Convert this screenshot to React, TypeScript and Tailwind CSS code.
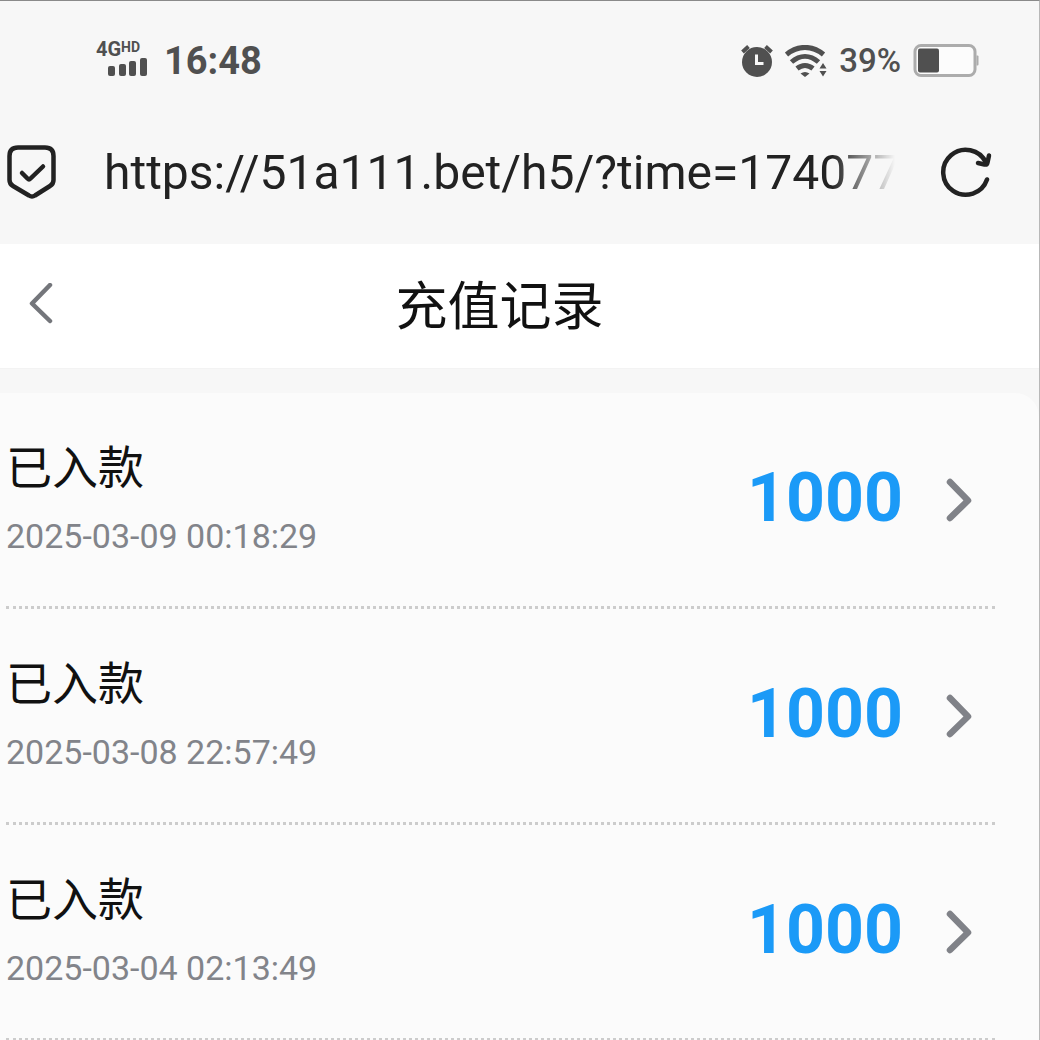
interface DepositRecord {
  id: number;
  status: string;
  time: string;
  amount: number;
}

const RECORDS: DepositRecord[] = [
  { id: 1, status: "已入款", time: "2025-03-09 00:18:29", amount: 1000 },
  { id: 2, status: "已入款", time: "2025-03-08 22:57:49", amount: 1000 },
  { id: 3, status: "已入款", time: "2025-03-04 02:13:49", amount: 1000 },
];

function SignalIcon() {
  return (
    <svg width="40" height="20" viewBox="0 0 40 20" fill="currentColor" aria-hidden="true">
      <rect x="0" y="9" width="7" height="10" rx="2" />
      <rect x="11" y="7" width="7" height="12" rx="2" />
      <rect x="21" y="4" width="7" height="15" rx="2" />
      <rect x="32" y="1" width="7" height="18" rx="2" />
    </svg>
  );
}

function AlarmIcon() {
  return (
    <svg width="32" height="34" viewBox="0 0 32 34" aria-hidden="true">
      <circle cx="16" cy="18" r="15" fill="currentColor" />
      <path d="M1.500 8 7.500 2.500M30.500 8 24.500 2.500" stroke="currentColor" strokeWidth="4" />
      <path d="M15.500 10.500V19.500H22.500" fill="none" stroke="#f7f7f7" strokeWidth="3" />
    </svg>
  );
}

function WifiIcon() {
  return (
    <svg width="42" height="32" viewBox="0 0 42 32" aria-hidden="true">
      <g fill="none" stroke="currentColor" strokeWidth="5">
        <path d="M1.500 9.500C12.500 0 27.500 0 38.500 9.500" />
        <path d="M6.500 17C15 9.500 25 9.500 33.500 17" />
        <path d="M12 23.500C17 19.500 23 19.500 28 23.500" />
      </g>
      <path d="M15.500 28.500Q20 25.500 24.500 28.500L20 32Z" fill="currentColor" />
      <path d="M34.500 23.500 38 18 41.500 23.500ZM34.500 26H41.500L38 31.500Z" fill="currentColor" />
    </svg>
  );
}

function BatteryIcon() {
  return (
    <svg width="66" height="34" viewBox="0 0 66 34" aria-hidden="true">
      <rect x="2" y="1.500" width="60" height="30" rx="6" fill="#fcfcfc" stroke="#acacac" strokeWidth="3" />
      <rect x="5" y="4.500" width="21" height="24" rx="2" fill="#505050" />
      <path d="M63.500 11.500h1q1 0 1 1v8q0 1-1 1h-1Z" fill="#acacac" />
    </svg>
  );
}

function ShieldIcon() {
  return (
    <svg
      width="50"
      height="56"
      viewBox="-1 1 50 56"
      fill="none"
      stroke="currentColor"
      strokeWidth="4.500"
      strokeLinecap="round"
      strokeLinejoin="round"
      aria-hidden="true"
    >
      <path d="M11 3.500H38Q46.500 3.500 46.500 12V36Q46.500 40 43 42L28 51.500Q25 53.500 22 51.500L6 42Q2.500 40 2.500 36V12Q2.500 3.500 11 3.500Z" />
      <path d="M15 29 20.500 34.500Q22 36 23.500 34.500L36 22.500" />
    </svg>
  );
}

function ReloadIcon() {
  return (
    <svg
      width="54"
      height="52"
      viewBox="0 0 54 52"
      fill="none"
      stroke="currentColor"
      strokeWidth="4.500"
      strokeLinecap="round"
      strokeLinejoin="round"
      aria-hidden="true"
    >
      <path d="M48 32.500A22.500 22.500 0 1 1 47 15.500" />
      <path d="M50 8.500 48.500 15.500Q48 18 45.500 17.500L39 16" />
    </svg>
  );
}

function StatusBar() {
  return (
    <div className="flex h-30 items-center justify-between pr-15 pl-24 text-[#505050]">
      <div className="flex items-center gap-4">
        <div className="flex w-13 flex-col pb-1">
          <div className="flex items-start font-bold">
            <span className="text-xl leading-4">4G</span>
            <span className="text-sm leading-3">HD</span>
          </div>
          <div className="flex justify-end">
            <SignalIcon />
          </div>
        </div>
        <span className="text-[38px] font-bold">16:48</span>
      </div>
      <div className="flex items-center">
        <AlarmIcon />
        <span className="ml-3">
          <WifiIcon />
        </span>
        <span className="ml-3 text-[33px] font-medium">39%</span>
        <span className="ml-3">
          <BatteryIcon />
        </span>
      </div>
    </div>
  );
}

function AddressBar() {
  return (
    <div className="flex h-26 items-center pr-[46px] pl-1.5 text-[#222222]">
      <button type="button" aria-label="网站安全" className="shrink-0">
        <ShieldIcon />
      </button>
      <input
        type="text"
        readOnly
        aria-label="网址"
        value="https://51a111.bet/h5/?time=174077"
        className="mr-11 ml-12 h-16 min-w-0 flex-1 bg-transparent mask-r-from-92% text-[48px] outline-none"
      />
      <button type="button" aria-label="刷新" className="shrink-0">
        <ReloadIcon />
      </button>
    </div>
  );
}

function RecordRow({ record }: { record: DepositRecord }) {
  return (
    <li className="mr-11 ml-1.5 border-b-3 border-dotted border-[#cccccc]">
      <button type="button" className="flex h-[213px] w-full items-center justify-between pr-5 text-left">
        <span className="flex flex-col pt-2">
          <span className="text-[46px] leading-16 text-[#111111]">{record.status}</span>
          <span className="text-[34px] leading-18 text-[#82848a]">{record.time}</span>
        </span>
        <span className="flex items-center gap-10">
          <span className="pb-1 text-[68px] font-bold text-[#1b9af7]">{record.amount}</span>
          <svg width="32" height="46" viewBox="0 0 32 46" fill="none" aria-hidden="true">
            <path d="M7 5 25 23.500 7 41" stroke="#808288" strokeWidth="6.500" strokeLinecap="round" strokeLinejoin="round" />
          </svg>
        </span>
      </button>
    </li>
  );
}

export default function App() {
  return (
    <div className="h-screen overflow-hidden border-t border-r border-t-[#8a8a8a] border-r-[#b8b8b8] bg-[#f7f7f7] font-['Roboto','Noto_Sans_CJK_SC',sans-serif]">
      <StatusBar />
      <AddressBar />
      {/* Page header */}
      <header className="mt-[19px] grid h-[125px] grid-cols-[80px_1fr_120px] items-center border-b border-[#f3f3f3] bg-white">
        <button type="button" aria-label="返回" className="flex h-full items-center pb-1 pl-7">
          <svg width="26" height="42" viewBox="0 0 26 42" fill="none" aria-hidden="true">
            <path d="M22 2 4 20.500 22 38" stroke="#74767b" strokeWidth="4.500" strokeLinecap="round" strokeLinejoin="round" />
          </svg>
        </button>
        <h1 className="pt-1 text-center text-[52px] text-[#111111]">充值记录</h1>
      </header>
      <main className="mt-6 rounded-tr-3xl bg-[#fbfbfb]">
        <ul>
          {RECORDS.map((record) => (
            <RecordRow key={record.id} record={record} />
          ))}
        </ul>
      </main>
    </div>
  );
}
